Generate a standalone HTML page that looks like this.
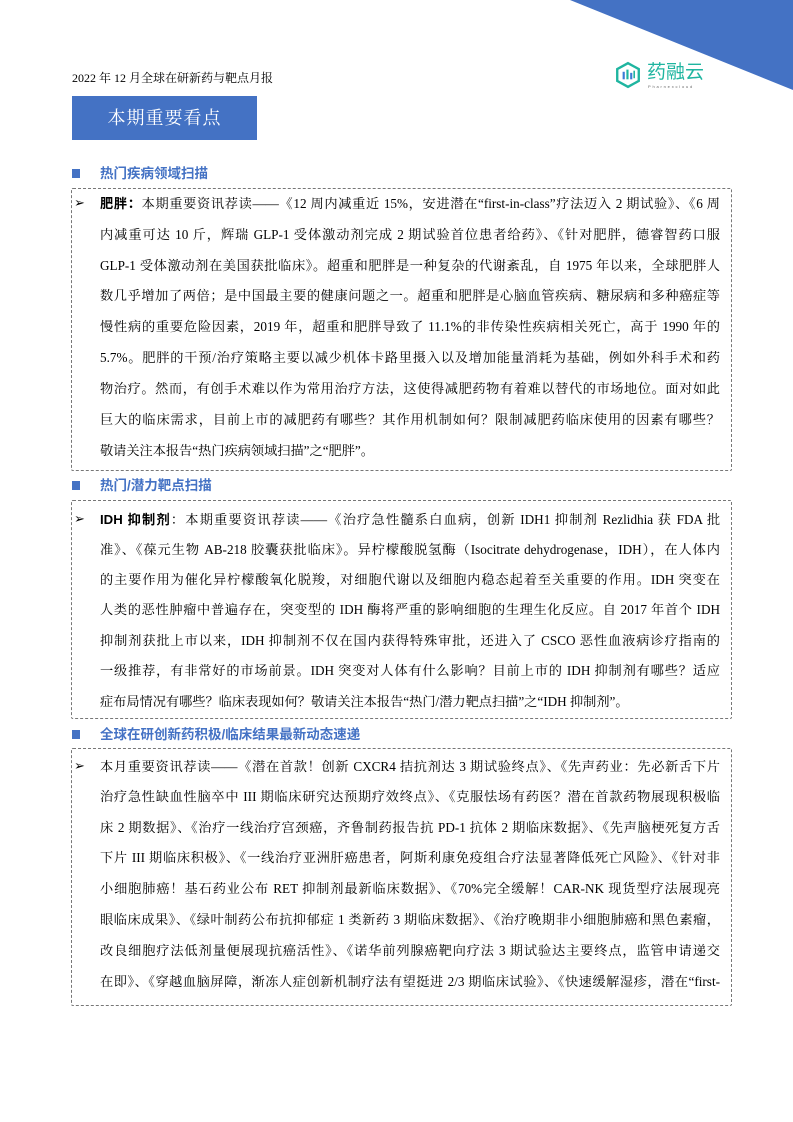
<!DOCTYPE html>
<html><head><meta charset="utf-8">
<style>
*{margin:0;padding:0;box-sizing:border-box}
body{width:793px;height:1122px;background:#fff;position:relative;overflow:hidden;font-family:"Liberation Serif","Noto Serif CJK SC",serif;color:#000}
.tri{position:absolute;left:0;top:0}
.hdr{position:absolute;left:72px;top:70px;font-size:12px;line-height:16px}
.banner{position:absolute;left:72px;top:96px;width:185px;height:44px;background:#4472c4;color:#fff;font-size:18px;line-height:44px;text-align:center;letter-spacing:1px}
.sec{position:absolute;left:72px;font-family:"Liberation Sans","Noto Sans CJK SC",sans-serif;font-weight:bold;color:#4472c4;font-size:13.5px;line-height:18px}
.sec i{display:inline-block;width:8px;height:9px;background:#4472c4;margin-right:20px;vertical-align:0px}
.box{position:absolute;left:71px;width:661px;border:1px dashed #777;border-radius:2px}
.ln{position:absolute;left:100px;width:620px;font-size:13.2px;line-height:20px;white-space:nowrap;text-align:justify;text-align-last:justify;overflow:hidden}
.ln.l{text-align-last:left}
.ar{position:absolute;left:74px;font-size:13px;font-family:"DejaVu Sans",sans-serif}
b{font-family:"Liberation Sans","Noto Sans CJK SC",sans-serif;font-weight:bold}
.logo{position:absolute;left:614px;top:61px}
.logot{position:absolute;left:647px;top:58px;font-family:"Noto Sans CJK SC",sans-serif;font-size:19px;color:#1fb5a0;letter-spacing:0px;line-height:26px}
.logos{position:absolute;left:648px;top:84px;font-size:4px;color:#666;letter-spacing:1.8px;font-family:"Liberation Sans",sans-serif}
</style></head><body>
<svg class="tri" width="793" height="140"><polygon points="570,0 793,0 793,90" fill="#4472c4"/></svg>
<div class="hdr">2022 年 12 月全球在研新药与靶点月报</div>
<svg class="logo" width="28" height="28" viewBox="0 0 26 26"><polygon points="13,2 23,7.5 23,18.5 13,24 3,18.5 3,7.5" fill="none" stroke="#1fb5a0" stroke-width="2.2"/><rect x="8" y="10" width="2" height="7" fill="#3a7bd5"/><rect x="11.5" y="8" width="2" height="9" fill="#1fb5a0"/><rect x="15" y="11" width="2" height="6" fill="#3a7bd5"/><rect x="18" y="9" width="1.5" height="7" fill="#1fb5a0"/></svg>
<div class="logot">药融云</div>
<div class="logos">Pharnexcloud</div>
<div class="banner">本期重要看点</div>

<div class="sec" style="top:165px"><i></i>热门疾病领域扫描</div>
<div class="box" style="top:188px;height:283px"></div>
<div class="ar" style="top:196px">➢</div>
<div class="ln" style="top:194px"><b>肥胖：</b>本期重要资讯荐读——《12 周内减重近 15%，安进潜在“first-in-class”疗法迈入 2 期试验》、《6 周</div>
<div class="ln" style="top:225px">内减重可达 10 斤，辉瑞 GLP-1 受体激动剂完成 2 期试验首位患者给药》、《针对肥胖，德睿智药口服</div>
<div class="ln" style="top:256px">GLP-1 受体激动剂在美国获批临床》。超重和肥胖是一种复杂的代谢紊乱，自 1975 年以来，全球肥胖人</div>
<div class="ln" style="top:286px">数几乎增加了两倍；是中国最主要的健康问题之一。超重和肥胖是心脑血管疾病、糖尿病和多种癌症等</div>
<div class="ln" style="top:317px">慢性病的重要危险因素，2019 年，超重和肥胖导致了 11.1%的非传染性疾病相关死亡，高于 1990 年的</div>
<div class="ln" style="top:348px">5.7%。肥胖的干预/治疗策略主要以减少机体卡路里摄入以及增加能量消耗为基础，例如外科手术和药</div>
<div class="ln" style="top:379px">物治疗。然而，有创手术难以作为常用治疗方法，这使得减肥药物有着难以替代的市场地位。面对如此</div>
<div class="ln" style="top:410px">巨大的临床需求，目前上市的减肥药有哪些？其作用机制如何？限制减肥药临床使用的因素有哪些？</div>
<div class="ln l" style="top:441px">敬请关注本报告“热门疾病领域扫描”之“肥胖”。</div>

<div class="sec" style="top:477px"><i></i>热门/潜力靶点扫描</div>
<div class="box" style="top:500px;height:219px"></div>
<div class="ar" style="top:512px">➢</div>
<div class="ln" style="top:510px"><b>IDH 抑制剂</b>：本期重要资讯荐读——《治疗急性髓系白血病，创新 IDH1 抑制剂 Rezlidhia 获 FDA 批</div>
<div class="ln" style="top:540px">准》、《葆元生物 AB-218 胶囊获批临床》。异柠檬酸脱氢酶（Isocitrate dehydrogenase，IDH），在人体内</div>
<div class="ln" style="top:570px">的主要作用为催化异柠檬酸氧化脱羧，对细胞代谢以及细胞内稳态起着至关重要的作用。IDH 突变在</div>
<div class="ln" style="top:600px">人类的恶性肿瘤中普遍存在，突变型的 IDH 酶将严重的影响细胞的生理生化反应。自 2017 年首个 IDH</div>
<div class="ln" style="top:631px">抑制剂获批上市以来，IDH 抑制剂不仅在国内获得特殊审批，还进入了 CSCO 恶性血液病诊疗指南的</div>
<div class="ln" style="top:661px">一级推荐，有非常好的市场前景。IDH 突变对人体有什么影响？目前上市的 IDH 抑制剂有哪些？适应</div>
<div class="ln l" style="top:692px">症布局情况有哪些？临床表现如何？敬请关注本报告“热门/潜力靶点扫描”之“IDH 抑制剂”。</div>

<div class="sec" style="top:726px"><i></i>全球在研创新药积极/临床结果最新动态速递</div>
<div class="box" style="top:748px;height:258px"></div>
<div class="ar" style="top:759px">➢</div>
<div class="ln" style="top:757px">本月重要资讯荐读——《潜在首款！创新 CXCR4 拮抗剂达 3 期试验终点》、《先声药业：先必新舌下片</div>
<div class="ln" style="top:787px">治疗急性缺血性脑卒中 III 期临床研究达预期疗效终点》、《克服怯场有药医？潜在首款药物展现积极临</div>
<div class="ln" style="top:818px">床 2 期数据》、《治疗一线治疗宫颈癌，齐鲁制药报告抗 PD-1 抗体 2 期临床数据》、《先声脑梗死复方舌</div>
<div class="ln" style="top:848px">下片 III 期临床积极》、《一线治疗亚洲肝癌患者，阿斯利康免疫组合疗法显著降低死亡风险》、《针对非</div>
<div class="ln" style="top:879px">小细胞肺癌！基石药业公布 RET 抑制剂最新临床数据》、《70%完全缓解！CAR-NK 现货型疗法展现亮</div>
<div class="ln" style="top:910px">眼临床成果》、《绿叶制药公布抗抑郁症 1 类新药 3 期临床数据》、《治疗晚期非小细胞肺癌和黑色素瘤，</div>
<div class="ln" style="top:941px">改良细胞疗法低剂量便展现抗癌活性》、《诺华前列腺癌靶向疗法 3 期试验达主要终点，监管申请递交</div>
<div class="ln" style="top:972px">在即》、《穿越血脑屏障，渐冻人症创新机制疗法有望挺进 2/3 期临床试验》、《快速缓解湿疹，潜在“first-</div>
</body></html>
